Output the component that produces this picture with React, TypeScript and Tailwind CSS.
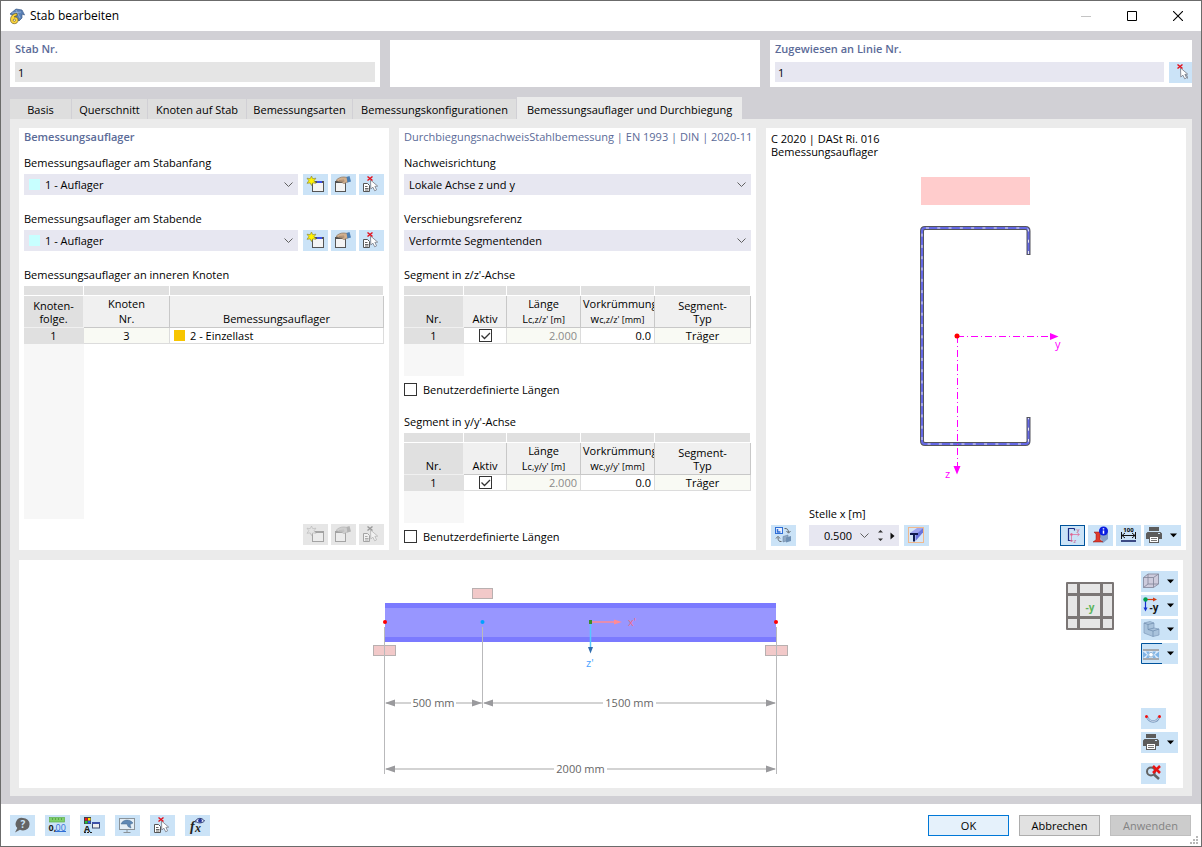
import React, { useState } from 'react';

interface IconButtonProps {
  label: string;
  children: React.ReactNode;
  disabled?: boolean;
  active?: boolean;
}

interface FieldProps {
  id: string;
  label: string;
  options: string[];
  swatch?: boolean;
  actions?: boolean;
}

interface SegmentTableProps {
  axis: string;
}

const TABS = [
  { name: 'Basis', width: 'w-[62px]' },
  { name: 'Querschnitt', width: 'w-[76px]' },
  { name: 'Knoten auf Stab', width: 'w-[99px]' },
  { name: 'Bemessungsarten', width: 'w-[106px]' },
  { name: 'Bemessungskonfigurationen', width: 'w-[164px]' },
  { name: 'Bemessungsauflager und Durchbiegung', width: 'w-[225px]' },
];

const CARD = 'min-w-0 bg-white';
const TITLE = 'flex h-[18px] items-center justify-between whitespace-nowrap pb-0.5 text-[#5b6b98]';
const LABEL = 'flex h-[22px] items-center pb-0.5';
const STRIP = 'border-b border-r border-white bg-[#e0e0e0] p-0';
const HEAD = 'overflow-hidden border-b border-r border-[#c8c8c8] bg-[#f0f0f0] p-0 align-bottom font-normal whitespace-nowrap';
const ROW_NR = 'border-b border-r border-[#e0e0e0] bg-[#e0e0e0] p-0 text-center font-normal';
const CELL = 'border-b border-r border-[#dcdcdc] p-0 text-center';

/* ---------- icons, all drawn on the 25x21 button face ---------- */

const NewIcon = () => (
  <>
    <rect x="9.5" y="7.5" width="11" height="10" fill="#f4f4f4" stroke="#555" />
    <rect x="10" y="7" width="10" height="2" fill="#505050" />
    <rect x="14" y="7" width="5" height="2" fill="#3c50e6" />
    <path
      d="M8.5 2l1.2 2.7 3.200-.5-1.800 2.500 1.800 2.600-3.200-.4-1.200 2.600-1.300-2.600-3.200.4 1.800-2.600L4 4.200l3.200.5z"
      fill="#fff200"
      stroke="#8e8c3c"
      strokeWidth=".7"
    />
  </>
);

const EditIcon = () => (
  <>
    <rect x="4.5" y="7.5" width="10" height="10" fill="#f4f4f4" stroke="#555" />
    <rect x="4" y="7" width="11" height="2" fill="#505050" />
    <path
      d="M5 6.5C7 4 10 2.800 13 3l4 .5V8c-2 0-2.500 1.500-4 1.500-1 0-1.500-1-2.500-1.500C8.500 8 7 7 5 6.500z"
      fill="#d2b08e"
      stroke="#8a7460"
      strokeWidth=".7"
    />
    <path d="M8 6.500l5-.500M9.500 8l4-1" stroke="#8a7460" strokeWidth=".6" />
    <path d="M15.500 3L18.500 2 20 7.500 16.500 8.500z" fill="#4a7fb5" />
  </>
);

const Cursor = () => (
  <path
    d="M11.500 6l.3 9 2.100-1.800 1.800 3.600 1.900-1-1.700-3.400 2.800-.3z"
    fill="#fff"
    stroke="#808590"
    strokeWidth=".9"
  />
);

const PickDeleteIcon = () => (
  <>
    <path d="M4.500 9.500h4l2 2v6h-6z" fill="#fff" stroke="#555" />
    <path d="M6 12.500h2.500M6 14.500h3.500M6 16h3.500" stroke="#555" strokeWidth=".9" />
    <Cursor />
    <path d="M8.500 2.500l5 4M13.500 2.500l-5 4" stroke="#e3101c" strokeWidth="1.500" />
  </>
);

const PickIcon = () => (
  <>
    <Cursor />
    <path d="M16 12.500l2 1 .500 3" stroke="#808590" fill="none" />
    <path d="M8.500 2.500l5 4M13.500 2.500l-5 4" stroke="#e3101c" strokeWidth="1.500" />
  </>
);

const SwapIcon = () => (
  <>
    <rect x="4.500" y="2.500" width="7" height="6" fill="#e8eefc" stroke="#2f6fd6" />
    <path d="M6.500 4v3h3" stroke="#2f6fd6" strokeWidth="1.500" fill="none" />
    <path
      d="M13.500 3.500c2.500-.3 4 1 4 4M15.500 6l2 2.200 2-2.200M10.500 16.500c-2.500.3-3.500-1-3.500-4M5 13.500l2-2.200 2 2.200"
      stroke="#60666c"
      fill="none"
    />
    <path d="M12 11.500l5-1.500v5.500l-5 1.500z" fill="#8fa9c4" stroke="#6b87a8" strokeWidth=".6" />
    <path d="M15 12.500l5-1.500v5l-5 1.500z" fill="#6f90b4" />
  </>
);

const ProfileIcon = () => (
  <>
    <rect x="4.500" y="2.500" width="15" height="15" fill="#d6e6f8" stroke="#f0b88c" />
    <path d="M6 8L13 3h6l-5 5z" fill="#9fa5ef" />
    <path d="M11.500 10l7.500-7v4.500L11.500 16z" fill="#6a74dc" />
    <path d="M6 9h8M10 9v7.500" stroke="#101a50" strokeWidth="2" />
  </>
);

const AxesIcon = () => (
  <>
    <path d="M14.500 3.500H8.500v12h3.500M14.500 3.500v2" stroke="#1c2b80" strokeWidth="1.200" fill="none" />
    <circle cx="11.500" cy="9.500" r="1.200" fill="#e0507c" />
    <path
      d="M11.500 9.500H19M11.500 9.500v7M17.500 8l2 1.500-2 1.500M10 15l1.500 2 1.500-2"
      stroke="#e0709c"
      strokeWidth=".8"
      fill="none"
    />
    <text x="16.500" y="7" fontSize="6" fill="#c0507c">y</text>
    <text x="13.500" y="18" fontSize="6" fill="#c0507c">z</text>
  </>
);

const SectionInfoIcon = () => (
  <>
    <path d="M10 8l5-4 5 2v8l-5 4z" fill="#86a0c8" />
    <path d="M6 7h8l-2 2.200v5.600L15 17H5l3-2.200V9.200z" fill="#e03a2c" stroke="#8a1a14" strokeWidth=".5" />
    <circle cx="15.500" cy="6" r="4.500" fill="#0a1ee0" />
    <path d="M15.500 5.500v3.300M15.500 3.200v1.200" stroke="#fff" strokeWidth="1.500" />
  </>
);

const DimensionIcon = () => (
  <>
    <text x="12.500" y="6.500" fontSize="6" fontWeight="bold" textAnchor="middle" fill="#000">100</text>
    <path d="M5.500 7v7M19.500 7v7M5.500 10.500h14M9 8l-3 2.500 3 2.500M16 8l3 2.500-3 2.500" stroke="#111" fill="none" />
    <rect x="5" y="15" width="15" height="2" fill="#3b4a84" />
  </>
);

const PrinterIcon = () => (
  <>
    <rect x="5" y="2" width="10" height="4" fill="#5c5c5c" />
    <path d="M3.500 7h13l1.500 1.500V14H15v-2.500H5V14H2V8.500z" fill="#5c5c5c" />
    <rect x="5.500" y="11.500" width="9" height="6" fill="#fff" stroke="#5c5c5c" />
    <path d="M7 13.500h6M7 15.500h6" stroke="#777" />
    <rect x="14" y="8" width="2" height="1" fill="#cfe5f8" />
  </>
);

const CubeIcon = () => (
  <>
    <path d="M2.500 6.500L7 3h10.500v10l-5 3.500h-10z" fill="#cdcbdc" />
    <path
      d="M2.500 6.500h10v10h-10zM2.500 6.500L7 3h10.500l-5 3.500M17.500 3v10l-5 3.500M7 3v10h10.500M7 13l-4.500 3.500"
      fill="none"
      stroke="#808498"
      strokeWidth=".8"
    />
  </>
);

const ViewIcon = () => (
  <>
    <path d="M4.500 4.500h8" stroke="#d23c14" strokeWidth="1.200" />
    <path d="M12 2.500l4 2-4 2z" fill="#d23c14" />
    <path d="M4.500 5v8" stroke="#1432d2" strokeWidth="1.200" />
    <path d="M2.500 12.500h4l-2 4z" fill="#1432d2" />
    <circle cx="4.500" cy="4.500" r="2.200" fill="#00a050" />
    <text x="8.500" y="15.500" fontSize="10" fontWeight="bold" fill="#111">-y</text>
  </>
);

const SolidIcon = () => (
  <>
    <path d="M3 4l6-1.500 4 1.500v5l5 1v6l-6 1.500L3 14z" fill="#a9c3dc" stroke="#7e9aba" strokeWidth=".7" />
    <path d="M3 4l4 1.500L13 4M7 5.500v5l5 1.500 6-2M12 12v5.500M7 10.500l6-1.500" stroke="#6c8aac" strokeWidth=".7" fill="none" />
  </>
);

const LoadsIcon = () => (
  <>
    <rect x="2" y="6" width="16" height="2" fill="#a5a9ae" />
    <rect x="2" y="15" width="16" height="2" fill="#a5a9ae" />
    <rect x="2" y="8" width="16" height="7" fill="#dceafa" />
    <path d="M2 8.500l4 3.200-4 3.300zM18 8.500l-4 3.200 4 3.300zM5 8.500h3.500L7 11.700 8.500 15H5l2-3.300zM15 8.500h-3.500l1.500 3.200-1.500 3.300H15l-2-3.300z" fill="#7fb4e6" />
    <circle cx="10" cy="11.700" r="2.300" fill="#fff" stroke="#6c9cc8" strokeWidth=".7" />
  </>
);

const DeflectionIcon = () => (
  <>
    <path d="M6 8.500C8 15 16.500 15 18 8.500" stroke="#7f9cc0" strokeWidth="2.500" fill="none" />
    <path d="M6 8.500C8 15 16.500 15 18 8.500" stroke="#dfeaf6" strokeWidth=".8" fill="none" />
    <circle cx="5.500" cy="8.500" r="1.500" fill="#f01010" />
    <circle cx="18.500" cy="8.500" r="1.500" fill="#f01010" />
  </>
);

const ResetZoomIcon = () => (
  <>
    <circle cx="10" cy="8.500" r="4" fill="none" stroke="#636363" strokeWidth="2" />
    <path d="M13 11.500l5 4.500" stroke="#636363" strokeWidth="2.500" />
    <path d="M12 3l7 7M19 3l-7 7" stroke="#e81414" strokeWidth="2.500" />
  </>
);

const HelpIcon = () => (
  <>
    <path d="M13 3a6.300 6 0 0 1 0 12.500c-1.200 0-2.200-.3-3-.8L5 17.500l2.300-4.500A6.100 6 0 0 1 13 3z" fill="#646464" />
    <text x="13" y="13" fontSize="10" fontWeight="bold" textAnchor="middle" fill="#cbe4f8">?</text>
  </>
);

const UnitsIcon = () => (
  <>
    <rect x="4.500" y="2.500" width="15" height="4.500" fill="#7fcf6a" stroke="#5fb04c" strokeWidth=".7" />
    <path d="M7.500 3v2M10.500 3v2M13.500 3v2M16.500 3v2" stroke="#4d9040" strokeWidth=".7" />
    <text x="3.500" y="15.500" fontSize="9" fontWeight="bold" fill="#222">0,</text>
    <text x="10.500" y="15.500" fontSize="9" fill="#2f6fd6">00</text>
    <path d="M10 16.500h11" stroke="#2f6fd6" />
  </>
);

const DisplayIcon = () => (
  <>
    <rect x="4" y="2" width="7" height="7" fill="#444" />
    <rect x="5" y="3" width="2.500" height="2.500" fill="#f01818" />
    <rect x="8" y="3" width="2.500" height="2.500" fill="#ffe000" />
    <rect x="5" y="6" width="2.500" height="2.500" fill="#20c040" />
    <rect x="8" y="6" width="2.500" height="2.500" fill="#2850f0" />
    <text x="4" y="17" fontSize="9" fontWeight="bold" fill="#222">A</text>
    <path d="M4 17.500h8" stroke="#222" strokeDasharray="2 1" />
    <rect x="12.500" y="7.500" width="7" height="5.500" fill="#eee" stroke="#3c4a70" />
    <rect x="12" y="7" width="8" height="2" fill="#3c50a8" />
  </>
);

const MonitorIcon = () => (
  <>
    <rect x="4.500" y="3.500" width="15" height="11" fill="#e4eef6" stroke="#8a9298" />
    <path d="M6 9c2-5 9-5 12-1l-3 1.500L16 13l-3-1.500-1-2.500z" fill="#5f88b4" stroke="#44688c" strokeWidth=".5" />
    <path d="M12 15v2M8.500 17.500h7" stroke="#8a9298" />
  </>
);

const FormulaIcon = () => (
  <>
    <text x="5" y="15.500" fontSize="14" fontStyle="italic" fontWeight="bold" fontFamily="Liberation Serif, serif" fill="#222">f</text>
    <text x="10" y="17" fontSize="12" fontStyle="italic" fontWeight="bold" fontFamily="Liberation Serif, serif" fill="#222">x</text>
    <path d="M10.500 6C12.500 2.500 17 2.500 19.500 6 17 8.500 12.500 8.500 10.500 6z" fill="#dfe6fa" stroke="#26346c" />
    <circle cx="15" cy="5.700" r="1.900" fill="#26389c" />
  </>
);

const ChevronDown = () => (
  <svg viewBox="0 0 9 6" className="h-1.5 w-[9px]" fill="none" stroke="#606060">
    <path d="M.5.500l4 4 4-4" />
  </svg>
);

const IconButton = ({ label, children, disabled, active }: IconButtonProps) => (
  <button
    type="button"
    aria-label={label}
    title={label}
    disabled={disabled}
    className={`h-[21px] w-[25px] shrink-0 ${disabled ? 'bg-[#e6e6e6]' : 'bg-[#cbe3f7]'} ${
      active ? 'outline-1 -outline-offset-1 outline-[#00539c]' : ''
    }`}
  >
    <svg viewBox="0 0 25 21" className={`h-[21px] w-[25px] ${disabled ? 'opacity-45 grayscale' : ''}`}>
      {children}
    </svg>
  </button>
);

const MenuButton = ({ label, children, active }: IconButtonProps) => (
  <button type="button" aria-label={label} title={label} className="h-[21px] w-[37px] shrink-0 bg-[#cbe3f7]">
    <svg viewBox="0 0 37 21" className="h-[21px] w-[37px]">
      {children}
      <path d="M26 8.500h7l-3.500 3.800z" fill="#000" />
      {active && <path d="M21 .5H.5v20H21" fill="none" stroke="#00539c" />}
    </svg>
  </button>
);

const Checkbox = ({ id, label, checked }: { id: string; label?: string; checked?: boolean }) => (
  <span className="relative block size-[13px] shrink-0">
    <input
      id={id}
      type="checkbox"
      aria-label={label}
      defaultChecked={checked}
      className="peer block size-[13px] appearance-none border border-[#333] bg-white"
    />
    <svg
      viewBox="0 0 13 13"
      className="pointer-events-none absolute inset-0 hidden size-[13px] peer-checked:block"
      fill="none"
      stroke="#333"
      strokeWidth="1.300"
    >
      <path d="M2.500 6.500l3 3 5.500-5.500" />
    </svg>
  </span>
);

const SupportActions = ({ disabled }: { disabled?: boolean }) => (
  <div className="flex gap-[3px]">
    <IconButton label="Neu" disabled={disabled}>
      <NewIcon />
    </IconButton>
    <IconButton label="Bearbeiten" disabled={disabled}>
      <EditIcon />
    </IconButton>
    <IconButton label="Auswahl löschen" disabled={disabled}>
      <PickDeleteIcon />
    </IconButton>
  </div>
);

const SelectField = ({ id, label, options, swatch, actions }: FieldProps) => (
  <div>
    <label htmlFor={id} className={LABEL}>
      {label}
    </label>
    <div className="flex gap-[5px]">
      <div className="relative flex-1">
        <select
          id={id}
          className={`block h-[21px] w-full appearance-none bg-[#e7e7f1] pr-6 ${swatch ? 'pl-[21px]' : 'pl-[5px]'}`}
        >
          {options.map((option) => (
            <option key={option}>{option}</option>
          ))}
        </select>
        {swatch && <span className="pointer-events-none absolute left-[5px] top-[5px] size-[11px] bg-[#c8ffff]" />}
        <span className="pointer-events-none absolute right-[5px] top-2 flex">
          <ChevronDown />
        </span>
      </div>
      {actions && <SupportActions />}
    </div>
  </div>
);

const SegmentTable = ({ axis }: SegmentTableProps) => (
  <section>
    <h3 className={LABEL}>
      Segment in {axis}/{axis}&#x27;-Achse
    </h3>
    <table className="w-full table-fixed border-separate border-spacing-0">
      <colgroup>
        <col className="w-[60px]" />
        <col className="w-[43px]" />
        <col className="w-[74px]" />
        <col className="w-[74px]" />
        <col />
      </colgroup>
      <thead>
        <tr className="h-[10px]">
          <td className={STRIP} />
          <td className={STRIP} />
          <td className={STRIP} />
          <td className={STRIP} />
          <td className={STRIP} />
        </tr>
        <tr className="h-8 leading-[16px]">
          <th className="border-b border-r border-[#f0f0f0] bg-[#e0e0e0] p-0 align-bottom font-normal">Nr.</th>
          <th className={HEAD}>Aktiv</th>
          <th className={HEAD}>
            <div className="leading-[15px]">Länge</div>
            <div className="h-4">
              L<span className="text-[9px] leading-none">c,{axis}/{axis}&#x27; [m]</span>
            </div>
          </th>
          <th className={HEAD}>
            <div className="pl-0.5 text-left leading-[15px]">Vorkrümmung</div>
            <div className="h-4">
              w<span className="text-[9px] leading-none">c,{axis}/{axis}&#x27; [mm]</span>
            </div>
          </th>
          <th className={HEAD}>
            <div className="pb-0.5 leading-[13px]">
              Segment-
              <br />
              Typ
            </div>
          </th>
        </tr>
      </thead>
      <tbody>
        <tr className="h-4 leading-[15px]">
          <th className={ROW_NR}>1</th>
          <td className={CELL}>
            <div className="flex justify-center">
              <Checkbox id={`active-${axis}`} label={`Segment 1 ${axis} aktiv`} checked />
            </div>
          </td>
          <td className={`${CELL} bg-[#f9faf4]`}>
            <div className="pr-[3px] text-right text-[#8a8a8a]">2.000</div>
          </td>
          <td className={CELL}>
            <div className="pr-[3px] text-right">0.0</div>
          </td>
          <td className={`${CELL} bg-[#f9faf4]`}>Träger</td>
        </tr>
      </tbody>
    </table>
    <div className="h-8 w-[60px] bg-[#f7f7f7]" />
    <div className="mt-[7px] flex h-[13px] items-center gap-1.5">
      <Checkbox id={`custom-${axis}`} />
      <label htmlFor={`custom-${axis}`}>Benutzerdefinierte Längen</label>
    </div>
  </section>
);

const SectionDrawing = () => (
  <svg viewBox="766 159 420 344" className="h-[344px] w-full">
    <rect x="921" y="177" width="109" height="28" fill="#ffcccc" />
    <g fill="none" strokeLinejoin="round">
      <path
        d="M1028.500 255v-24q0-3-3-3h-100.500q-3 0-3 3v210q0 3 3 3h100.500q3 0 3-3v-24"
        stroke="#55555c"
        strokeWidth="4"
      />
      <path
        d="M1028.500 254v-23q0-3-3-3h-100.500q-3 0-3 3v210q0 3 3 3h100.500q3 0 3-3v-23"
        stroke="#6468e6"
        strokeWidth="2"
      />
      <path
        d="M1028.500 254v-23q0-3-3-3h-100.500q-3 0-3 3v210q0 3 3 3h100.500q3 0 3-3v-23"
        stroke="#e8e8f4"
        strokeDasharray="3 8.300"
      />
    </g>
    <g stroke="#ff00ff" strokeDasharray="7 3 1 3">
      <path d="M957 336.500h94" />
      <path d="M957.500 336v130" />
    </g>
    <path d="M1050 333l8.500 3.500-8.500 3.500zM953.500 466h7l-3.500 8.500z" fill="#ff00ff" />
    <circle cx="957" cy="336" r="2.500" fill="#ff0000" />
    <text x="1055" y="348" fontSize="11" fill="#ff00ff">y</text>
    <text x="945" y="478" fontSize="11" fill="#ff00ff">z</text>
  </svg>
);

const MemberDrawing = () => (
  <svg viewBox="19 560 1117 228" className="h-[228px] min-w-0 flex-1">
    <rect x="385" y="603" width="391" height="39" fill="#9896ff" />
    <rect x="385" y="603" width="391" height="5" fill="#7b7aff" />
    <rect x="385" y="637" width="391" height="5" fill="#7b7aff" />
    <g fill="#f2c9c9" stroke="#b8b0b0">
      <rect x="472.500" y="588.500" width="20" height="10" />
      <rect x="373.500" y="645.500" width="22" height="10" />
      <rect x="765.500" y="645.500" width="22" height="10" />
    </g>
    <path d="M384.500 627v147M482.500 627v81M776.500 627v147" stroke="#b9b9bb" />
    <path d="M386 703h25M456 703h26M484 703h119M656 703h119M386 769h168M607 769h168" stroke="#d3d3d3" strokeWidth="2" />
    <path
      d="M385 703l10-3.500v7zM482 703l-10-3.500v7zM483 703l10-3.500v7zM776 703l-10-3.500v7zM385 769l10-3.500v7zM776 769l-10-3.500v7z"
      fill="#9a9a9d"
    />
    <g fontSize="11" fill="#666" textAnchor="middle">
      <text x="433.500" y="707">500 mm</text>
      <text x="629.500" y="707">1500 mm</text>
      <text x="580.500" y="773">2000 mm</text>
    </g>
    <circle cx="385" cy="622" r="2" fill="#ff0000" />
    <circle cx="776" cy="622" r="2" fill="#ff0000" />
    <circle cx="482.500" cy="622" r="2" fill="#00a2ff" />
    <path d="M591 622h26" stroke="#ff8a96" strokeWidth="1.500" />
    <path d="M614 619.500l8 2.500-8 2.500z" fill="#ff8a96" />
    <path d="M590.500 622v26" stroke="#55c8ff" strokeWidth="1.500" />
    <path d="M588 647h5l-2.500 6.500z" fill="#2f6cae" />
    <rect x="589" y="620" width="3" height="4" fill="#3c8c28" />
    <text x="628" y="626" fontSize="11" fill="#e8708c">x&#x27;</text>
    <text x="586" y="667" fontSize="11" fill="#4aa3ff">z&#x27;</text>
    <rect x="1066" y="582" width="48" height="48" rx="1" fill="#7b7675" />
    <g fill="#e6e6e6">
      <rect x="1068" y="584" width="9" height="9" />
      <rect x="1080" y="584" width="20" height="9" />
      <rect x="1103" y="584" width="9" height="9" />
      <rect x="1068" y="596" width="9" height="20" />
      <rect x="1080" y="596" width="20" height="20" />
      <rect x="1103" y="596" width="9" height="20" />
      <rect x="1068" y="619" width="9" height="9" />
      <rect x="1080" y="619" width="20" height="9" />
      <rect x="1103" y="619" width="9" height="9" />
    </g>
    <text x="1090" y="611" fontSize="10" fontWeight="bold" textAnchor="middle" fill="#5cb45c">-y</text>
  </svg>
);

const InnerNodesTable = () => (
  <table className="w-full table-fixed border-separate border-spacing-0">
    <colgroup>
      <col className="w-[60px]" />
      <col className="w-[86px]" />
      <col />
    </colgroup>
    <thead>
      <tr className="h-[10px]">
        <td className={STRIP} />
        <td className={STRIP} />
        <td className={STRIP} />
      </tr>
      <tr className="h-8 leading-[16px]">
        <th className="border-b border-r border-[#f0f0f0] bg-[#e0e0e0] p-0 align-bottom font-normal">
          <div className="pb-0.5 leading-[13px]">
            Knoten-
            <br />
            folge.
          </div>
        </th>
        <th className={HEAD}>
          <div className="leading-[15px]">Knoten</div>
          <div>Nr.</div>
        </th>
        <th className={HEAD}>Bemessungsauflager</th>
      </tr>
    </thead>
    <tbody>
      <tr className="h-4 leading-[15px]">
        <th className={ROW_NR}>1</th>
        <td className={`${CELL} bg-[#f9faf4]`}>3</td>
        <td className={CELL}>
          <div className="flex items-center gap-[5px] pl-1">
            <span className="size-[11px] bg-[#f7c500]" />
            2 - Einzellast
          </div>
        </td>
      </tr>
    </tbody>
  </table>
);

const App = () => {
  const [activeTab, setActiveTab] = useState(5);

  return (
    <div className="flex min-h-screen flex-col border border-[#6b6b6b] bg-white font-['Open_Sans','Noto_Sans',sans-serif] text-[11px] leading-[15px] text-black">
      <header className="flex h-[30px] items-center pl-[7px]">
        <svg viewBox="0 0 17 17" className="size-[17px]">
          <path d="M2 6l6-5 6 1 2.500 5-2.500-1v4l-3 3-5-5z" fill="#5b82b8" stroke="#3a5a88" strokeWidth=".7" />
          <path d="M8 2l4 8M4 5l9-1" stroke="#a9c0dc" strokeWidth=".7" />
          <path
            d="M9 5.500C5 5.500 2.500 8 2.500 11.800c0 2.400 1.500 3.900 3.800 3.900s3.800-1.400 3.800-3.600c0-2-1.300-3.200-3.100-3.200-.3 0-.6 0-.9.100C6.700 8.200 7.600 7.800 9 7.800zM6.300 11.100c.7 0 1.100.4 1.100 1.100s-.4 1.200-1.100 1.200-1.100-.5-1.100-1.200.4-1.100 1.100-1.100z"
            fill="#fbd53c"
            stroke="#6e5c1c"
            strokeWidth=".7"
          />
        </svg>
        <h1 className="ml-[5px] flex-1 text-xs">Stab bearbeiten</h1>
        <button type="button" aria-label="Minimieren" disabled className="flex h-[30px] w-[46px] items-center justify-center">
          <svg viewBox="0 0 10 10" className="size-2.5">
            <path d="M0 5.500h10" stroke="#c4c4c4" />
          </svg>
        </button>
        <button type="button" aria-label="Maximieren" className="flex h-[30px] w-[46px] items-center justify-center">
          <svg viewBox="0 0 10 10" className="size-2.5">
            <path d="M.5.500h9v9h-9z" fill="none" stroke="#000" />
          </svg>
        </button>
        <button type="button" aria-label="Schließen" className="flex h-[30px] w-[46px] items-center justify-center">
          <svg viewBox="0 0 10 10" className="size-2.5">
            <path d="M0 0l10 10M10 0L0 10" stroke="#000" strokeWidth="1.100" />
          </svg>
        </button>
      </header>

      <main className="flex-1 bg-[#d1d0d5] px-[9px] pb-2 pt-[9px]">
        <div className="grid grid-cols-[370fr_370fr_422fr] gap-2.5">
          <div className={`${CARD} px-[5px] pb-[5px]`}>
            <label htmlFor="member-no" className={`${TITLE} font-semibold`}>
              Stab Nr.
            </label>
            <input id="member-no" readOnly defaultValue="1" className="mt-1 block h-5 w-full bg-[#e5e5e5] pl-[3px]" />
          </div>
          <div className={CARD} />
          <div className={`${CARD} pl-[5px]`}>
            <label htmlFor="line-no" className={`${TITLE} font-semibold`}>
              Zugewiesen an Linie Nr.
            </label>
            <div className="mt-1 flex gap-[5px]">
              <input id="line-no" defaultValue="1" className="h-5 min-w-0 flex-1 bg-[#e7e7f1] pl-[3px]" />
              <div className="flex w-[23px] overflow-hidden">
                <IconButton label="Linie auswählen">
                  <PickIcon />
                </IconButton>
              </div>
            </div>
          </div>
        </div>

        <div role="tablist" className="mt-2.5 flex items-end">
          {TABS.map((tab, index) => (
            <button
              key={tab.name}
              type="button"
              role="tab"
              aria-selected={index === activeTab}
              onClick={() => setActiveTab(index)}
              className={`${tab.width} whitespace-nowrap text-center ${
                index === activeTab
                  ? 'h-[22px] bg-[#ebebeb] pt-0.5'
                  : 'h-5 border-r border-[#d1d0d5] bg-[#dedede]'
              }`}
            >
              {tab.name}
            </button>
          ))}
        </div>

        <div className="bg-[#ebebeb] py-2 pl-[9px] pt-[9px]">
          <div className="grid grid-cols-[370fr_357fr_420fr] gap-2.5 pr-1.5">
            <section className={`${CARD} flex flex-col px-[5px] pb-[5px]`}>
              <h2 className={`${TITLE} font-semibold`}>Bemessungsauflager</h2>
              <div className="mt-1.5 flex flex-col gap-[13px]">
                <SelectField
                  id="support-start"
                  label="Bemessungsauflager am Stabanfang"
                  options={['1 - Auflager', '2 - Einzellast']}
                  swatch
                  actions
                />
                <SelectField
                  id="support-end"
                  label="Bemessungsauflager am Stabende"
                  options={['1 - Auflager', '2 - Einzellast']}
                  swatch
                  actions
                />
                <div>
                  <h3 className={LABEL}>Bemessungsauflager an inneren Knoten</h3>
                  <InnerNodesTable />
                </div>
              </div>
              <div className="w-[60px] flex-1 bg-[#f7f7f7]" />
              <div className="mt-[5px] flex justify-end">
                <SupportActions disabled />
              </div>
            </section>

            <section className={`${CARD} px-[5px] pb-[7px]`}>
              <h2 className={`${TITLE} font-medium`}>
                <span>Durchbiegungsnachweis</span>
                <span>Stahlbemessung | EN 1993 | DIN | 2020-11</span>
              </h2>
              <div className="mt-1.5 flex flex-col gap-[13px]">
                <SelectField id="direction" label="Nachweisrichtung" options={['Lokale Achse z und y']} />
                <SelectField id="reference" label="Verschiebungsreferenz" options={['Verformte Segmentenden']} />
                <SegmentTable axis="z" />
              </div>
              <div className="mt-[15px]">
                <SegmentTable axis="y" />
              </div>
            </section>

            <section className={`${CARD} pb-1`}>
              <div className="px-[5px] pb-px pt-1 leading-[13px]">
                C 2020 | DASt Ri. 016
                <br />
                Bemessungsauflager
              </div>
              <SectionDrawing />
              <div className="flex items-end px-[5px]">
                <IconButton label="Darstellung wechseln">
                  <SwapIcon />
                </IconButton>
                <div className="ml-[13px] mr-[5px] w-[90px]">
                  <label htmlFor="position" className={LABEL}>
                    Stelle x [m]
                  </label>
                  <div className="flex h-[21px] items-center bg-[#e7e7f1]">
                    <input id="position" defaultValue="0.500" className="h-[21px] w-[43px] bg-transparent text-right" />
                    <button type="button" aria-label="Liste öffnen" className="ml-2">
                      <ChevronDown />
                    </button>
                    <button type="button" aria-label="Wert ändern" className="ml-2">
                      <svg viewBox="0 0 7 13" className="h-[13px] w-[7px]" fill="#333">
                        <path d="M1 3.500L3.500 1 6 3.500zM1 9.500L3.500 12 6 9.500z" />
                      </svg>
                    </button>
                    <button type="button" aria-label="Nächste Stelle" className="ml-1.5">
                      <svg viewBox="0 0 5 8" className="h-2 w-[5px]" fill="#111">
                        <path d="M.5.500v7l4-3.500z" />
                      </svg>
                    </button>
                  </div>
                </div>
                <IconButton label="Profil anzeigen">
                  <ProfileIcon />
                </IconButton>
                <div className="ml-auto flex gap-[3px]">
                  <IconButton label="Achsen" active>
                    <AxesIcon />
                  </IconButton>
                  <IconButton label="Querschnittsinfo">
                    <SectionInfoIcon />
                  </IconButton>
                  <IconButton label="Bemaßung">
                    <DimensionIcon />
                  </IconButton>
                  <MenuButton label="Drucken">
                    <PrinterIcon />
                  </MenuButton>
                </div>
              </div>
            </section>
          </div>

          <section className={`${CARD} mr-[9px] mt-2.5 flex pr-[5px]`}>
            <MemberDrawing />
            <div className="ml-[5px] flex flex-col gap-[3px] pb-1 pt-[11px]">
              <MenuButton label="Ansicht">
                <CubeIcon />
              </MenuButton>
              <MenuButton label="Blickrichtung">
                <ViewIcon />
              </MenuButton>
              <MenuButton label="Körper">
                <SolidIcon />
              </MenuButton>
              <MenuButton label="Lasten" active>
                <LoadsIcon />
              </MenuButton>
              <div className="mt-auto flex flex-col gap-[3px]">
                <IconButton label="Verformung">
                  <DeflectionIcon />
                </IconButton>
                <MenuButton label="Grafik drucken">
                  <PrinterIcon />
                </MenuButton>
              </div>
              <div className="mt-[7px] flex">
                <IconButton label="Zoom zurücksetzen">
                  <ResetZoomIcon />
                </IconButton>
              </div>
            </div>
          </section>
        </div>
      </main>

      <footer className="relative flex h-[42px] items-center justify-between pl-[9px] pr-2.5">
        <div className="flex gap-2.5">
          <IconButton label="Hilfe">
            <HelpIcon />
          </IconButton>
          <IconButton label="Einheiten">
            <UnitsIcon />
          </IconButton>
          <IconButton label="Anzeigeeigenschaften">
            <DisplayIcon />
          </IconButton>
          <IconButton label="Grafik">
            <MonitorIcon />
          </IconButton>
          <IconButton label="Auswahl aufheben">
            <PickDeleteIcon />
          </IconButton>
          <IconButton label="Formel">
            <FormulaIcon />
          </IconButton>
        </div>
        <div className="flex gap-2.5">
          <button type="button" className="h-[21px] w-[81px] border border-[#0078d7] bg-[#e5f1fb]">
            OK
          </button>
          <button type="button" className="h-[21px] w-[81px] border border-[#adadad] bg-[#e1e1e1]">
            Abbrechen
          </button>
          <button type="button" disabled className="h-[21px] w-[81px] border border-[#bfbfbf] bg-[#cccccc] text-[#838383]">
            Anwenden
          </button>
        </div>
        <svg viewBox="0 0 8 8" className="absolute bottom-0.5 right-[3px] size-2" fill="#b8b8b8">
          <path d="M6 0h2v2H6zM3 3h2v2H3zM6 3h2v2H6zM0 6h2v2H0zM3 6h2v2H3zM6 6h2v2H6z" />
        </svg>
      </footer>
    </div>
  );
};

export default App;
